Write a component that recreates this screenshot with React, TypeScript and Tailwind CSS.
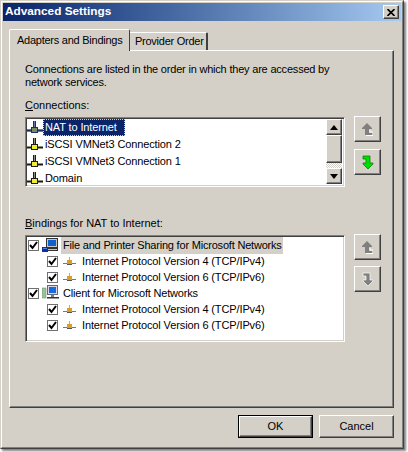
import React from "react";

const raised = "border border-t-white border-l-white border-r-[#404040] border-b-[#404040]";

function NetIcon({ selected }: { selected?: boolean }) {
  const dark = selected ? "#1a2f6a" : "#1c1c1c";
  const mid = selected ? "#6a78a0" : "#8c8c7c";
  const fill = selected ? "#7a8a60" : "#f0ec30";
  return (
    <svg width="16" height="14" viewBox="0 0 16 14" className="shrink-0 -ml-px">
      <rect x="0" y="8" width="16" height="1" fill={mid} />
      <rect x="0" y="9" width="16" height="1" fill={dark} />
      <rect x="0" y="10" width="16" height="1" fill={mid} />
      <rect x="6" y="0" width="1" height="8" fill={dark} />
      <rect x="7" y="0" width="1" height="8" fill={mid} />
      <rect x="8" y="0" width="1" height="8" fill={dark} />
      <rect x="4.5" y="6.5" width="6" height="5" fill={fill} stroke={dark} strokeWidth="1" />
    </svg>
  );
}

function ProtoIcon() {
  return (
    <svg width="13" height="9" viewBox="0 0 13 9" className="shrink-0 block">
      <rect x="0" y="6" width="13" height="1" fill="#777" />
      <rect x="6" y="0" width="1" height="4" fill="#aaa" />
      <rect x="4" y="3" width="5" height="4" fill="#d8a020" />
      <rect x="4" y="7" width="5" height="1" fill="#555" />
    </svg>
  );
}

function Check() {
  return (
    <span className="w-[11px] h-[11px] shrink-0 border border-[#707070] bg-white flex items-center justify-center">
      <svg width="9" height="9" viewBox="0 0 9 9">
        <path d="M1 4 L3.5 7 L8 1" fill="none" stroke="#000" strokeWidth="2" />
      </svg>
    </span>
  );
}

function PcIcon() {
  return (
    <svg width="17" height="15" viewBox="0 0 17 15" className="shrink-0 block">
      <rect x="4.5" y="0.5" width="11" height="9" fill="#c8c8c0" stroke="#333" />
      <rect x="6" y="2" width="8" height="6" fill="#1060d0" />
      <rect x="5.5" y="10.5" width="10" height="2" fill="#c8c8c0" stroke="#333" />
      <rect x="0" y="9" width="6" height="5" fill="#1030a0" />
      <rect x="1" y="10" width="4" height="1" fill="#5080e0" />
    </svg>
  );
}

function ClientIcon() {
  return (
    <svg width="17" height="16" viewBox="0 0 17 16" className="shrink-0 block">
      <rect x="0" y="3" width="4" height="10" fill="#90c890" stroke="#888" strokeWidth="0.6" />
      <rect x="5.5" y="0.5" width="10" height="9" fill="#d8d8e8" stroke="#667" />
      <rect x="7" y="2" width="7" height="6" fill="#1868e0" />
      <rect x="9" y="10" width="3" height="2" fill="#778" />
      <rect x="5" y="12" width="12" height="1.5" fill="#333" />
    </svg>
  );
}

function ArrowUp({ color, edge }: { color: string; edge: string }) {
  return (
    <svg width="13" height="14" viewBox="0 0 13 14">
      <path d="M6 1 L1 6 V7 H4 V13 H11 V11 H8 V7 H11 V6 Z" fill={color} />
      <path d="M9 8 V10 H12 M5 13.5 H12" stroke={edge} strokeWidth="1" fill="none" />
    </svg>
  );
}

function ArrowDown({ color, edge }: { color: string; edge: string }) {
  return (
    <svg width="13" height="15" viewBox="0 0 13 15">
      <path d="M2 1 H9 V8 H12 V9 L7 14 L2 9 V8 H5 V4 H2 Z" fill={color} stroke={edge} strokeWidth="0.7" />
    </svg>
  );
}

function MoveButton({ children }: { children: React.ReactNode }) {
  return (
    <div className="w-[27px] h-[26px] bg-[#d4d0c8] border border-t-white border-l-white border-r-[#404040] border-b-[#404040] shadow-[inset_-1px_-1px_0_#808080] flex items-center justify-center">
      {children}
    </div>
  );
}

function ScrollBtn({ up }: { up?: boolean }) {
  return (
    <div className={`w-[16px] h-[16px] bg-[#d4d0c8] ${raised} shadow-[inset_-1px_-1px_0_#808080] flex items-center justify-center`}>
      <svg width="8" height="5" viewBox="0 0 8 5">
        <path d={up ? "M4 0 L8 5 H0 Z" : "M0 0 H8 L4 5 Z"} fill="#000" />
      </svg>
    </div>
  );
}

function ConnRow({ label, selected }: { label: string; selected?: boolean }) {
  return (
    <div className="h-[17px] flex items-center whitespace-nowrap tracking-[-0.12px]">
      <NetIcon selected={selected} />
      <span
        className={
          selected
            ? "h-[17px] w-[82px] pl-[1px] flex items-center bg-[#0a246a] text-white border border-dotted border-[#d4d0c8]"
            : "pl-[2px]"
        }
      >
        {label}
      </span>
    </div>
  );
}

function BindHead({ icon, label, hi }: { icon: React.ReactNode; label: string; hi?: boolean }) {
  return (
    <div className="h-[16px] flex items-center whitespace-nowrap tracking-[-0.2px]">
      <Check />
      <span className="ml-[3px] w-[17px] shrink-0">{icon}</span>
      <span className={hi ? "ml-[2px] pl-[2px] h-[17px] w-[222px] flex items-center bg-[#d4d0c8]" : "ml-[4px]"}>{label}</span>
    </div>
  );
}

function BindSub({ label }: { label: string }) {
  return (
    <div className="h-[16px] flex items-center pl-[19px] whitespace-nowrap tracking-[-0.12px]">
      <Check />
      <span className="ml-[5px]"><ProtoIcon /></span>
      <span className="ml-[6px]">{label}</span>
    </div>
  );
}

const listBox = "w-[320px] bg-white border border-t-[#808080] border-l-[#808080] border-r-white border-b-white shadow-[inset_1px_1px_0_#404040,inset_-1px_-1px_0_#d4d0c8]";

export default function App() {
  return (
    <div className="w-[408px] h-[452px] bg-white overflow-hidden font-['Liberation_Sans',Arial,sans-serif] text-[11px] text-black">
      <div className="w-[404px] h-[449px] bg-[#d4d0c8] border border-t-[#d4d0c8] border-l-[#d4d0c8] border-r-[#404040] border-b-[#404040] shadow-[2px_2px_2px_#808080]">
        <div className="h-full border border-t-white border-l-white border-r-[#808080] border-b-[#808080] p-px flex flex-col">
          <div className="h-[18px] flex items-center justify-between bg-gradient-to-r from-[#0a246a] to-[#a6caf0] pl-[2px] pr-[2px] text-white font-bold text-[11.8px]">
            <span>Advanced Settings</span>
            <div className={`w-[16px] h-[14px] bg-[#d4d0c8] ${raised} shadow-[inset_-1px_-1px_0_#808080] flex items-center justify-center`}>
              <svg width="8" height="7" viewBox="0 0 8 7">
                <path d="M0.5 0 L7.5 7 M7.5 0 L0.5 7" stroke="#000" strokeWidth="1.6" />
              </svg>
            </div>
          </div>

          <div className="flex-1 flex flex-col pl-[6px] pr-[7px] pt-[8px]">
            <div className="flex items-end h-[21px] relative z-10 whitespace-nowrap tracking-[-0.25px]">
              <div className="w-[121px] h-[22px] -mb-px bg-[#d4d0c8] border-t border-l border-r border-t-white border-l-white border-r-[#404040] rounded-t-[2px] pl-[7px] flex items-center">
                Adapters and Bindings
              </div>
              <div className="w-[78px] h-[18px] bg-[#d4d0c8] border-t border-r-2 border-t-white border-r-[#404040] rounded-tr-[2px] pl-[5px] flex items-center">
                Provider Order
              </div>
            </div>

            <div className="h-[358px] border border-t-white border-l-white border-r-[#404040] border-b-[#404040] shadow-[inset_-1px_-1px_0_#808080] pl-[15px] pt-[12px]">
              <p className="leading-[13px] whitespace-nowrap tracking-[-0.2px]">
                Connections are listed in the order in which they are accessed by<br />network services.
              </p>
              <p className="mt-[10px] leading-[13px]"><u>C</u>onnections:</p>

              <div className="mt-[5px] flex gap-[9px]">
                <div className={`${listBox} h-[70px] flex justify-between p-[2px] pt-[1px]`}>
                  <div className="flex-1">
                    <ConnRow label="NAT to Internet" selected />
                    <ConnRow label="iSCSI VMNet3 Connection 2" />
                    <ConnRow label="iSCSI VMNet3 Connection 1" />
                    <ConnRow label="Domain" />
                  </div>
                  <div className="w-[16px] flex flex-col bg-[repeating-conic-gradient(#d4d0c8_0_25%,#ffffff_0_50%)] bg-[length:2px_2px]">
                    <ScrollBtn up />
                    <div className={`w-[16px] h-[28px] bg-[#d4d0c8] ${raised} shadow-[inset_-1px_-1px_0_#808080]`} />
                    <div className="flex-1" />
                    <ScrollBtn />
                  </div>
                </div>
                <div className="flex flex-col gap-[7px] -mt-[1px]">
                  <MoveButton><ArrowUp color="#808080" edge="#ffffff" /></MoveButton>
                  <MoveButton><ArrowDown color="#00e000" edge="#007000" /></MoveButton>
                </div>
              </div>

              <p className="mt-[30px] leading-[13px]"><u>B</u>indings for NAT to Internet:</p>

              <div className="mt-[5px] flex gap-[9px]">
                <div className={`${listBox} h-[107px] p-[2px] pt-[1px]`}>
                  <BindHead icon={<PcIcon />} label="File and Printer Sharing for Microsoft Networks" hi />
                  <BindSub label="Internet Protocol Version 4 (TCP/IPv4)" />
                  <BindSub label="Internet Protocol Version 6 (TCP/IPv6)" />
                  <BindHead icon={<ClientIcon />} label="Client for Microsoft Networks" />
                  <BindSub label="Internet Protocol Version 4 (TCP/IPv4)" />
                  <BindSub label="Internet Protocol Version 6 (TCP/IPv6)" />
                </div>
                <div className="flex flex-col gap-[6px] -mt-[1px]">
                  <MoveButton><ArrowUp color="#808080" edge="#ffffff" /></MoveButton>
                  <MoveButton><ArrowDown color="#808080" edge="#ffffff" /></MoveButton>
                </div>
              </div>
            </div>

            <div className="flex justify-end gap-[6px] mt-[7px] pr-0">
              <div className="w-[75px] h-[23px] border border-black">
                <div className={`h-full bg-[#d4d0c8] ${raised} shadow-[inset_-1px_-1px_0_#808080] flex items-center justify-center`}>OK</div>
              </div>
              <div className={`w-[75px] h-[23px] bg-[#d4d0c8] ${raised} shadow-[inset_-1px_-1px_0_#808080] flex items-center justify-center`}>Cancel</div>
            </div>
          </div>
        </div>
      </div>
    </div>
  );
}
